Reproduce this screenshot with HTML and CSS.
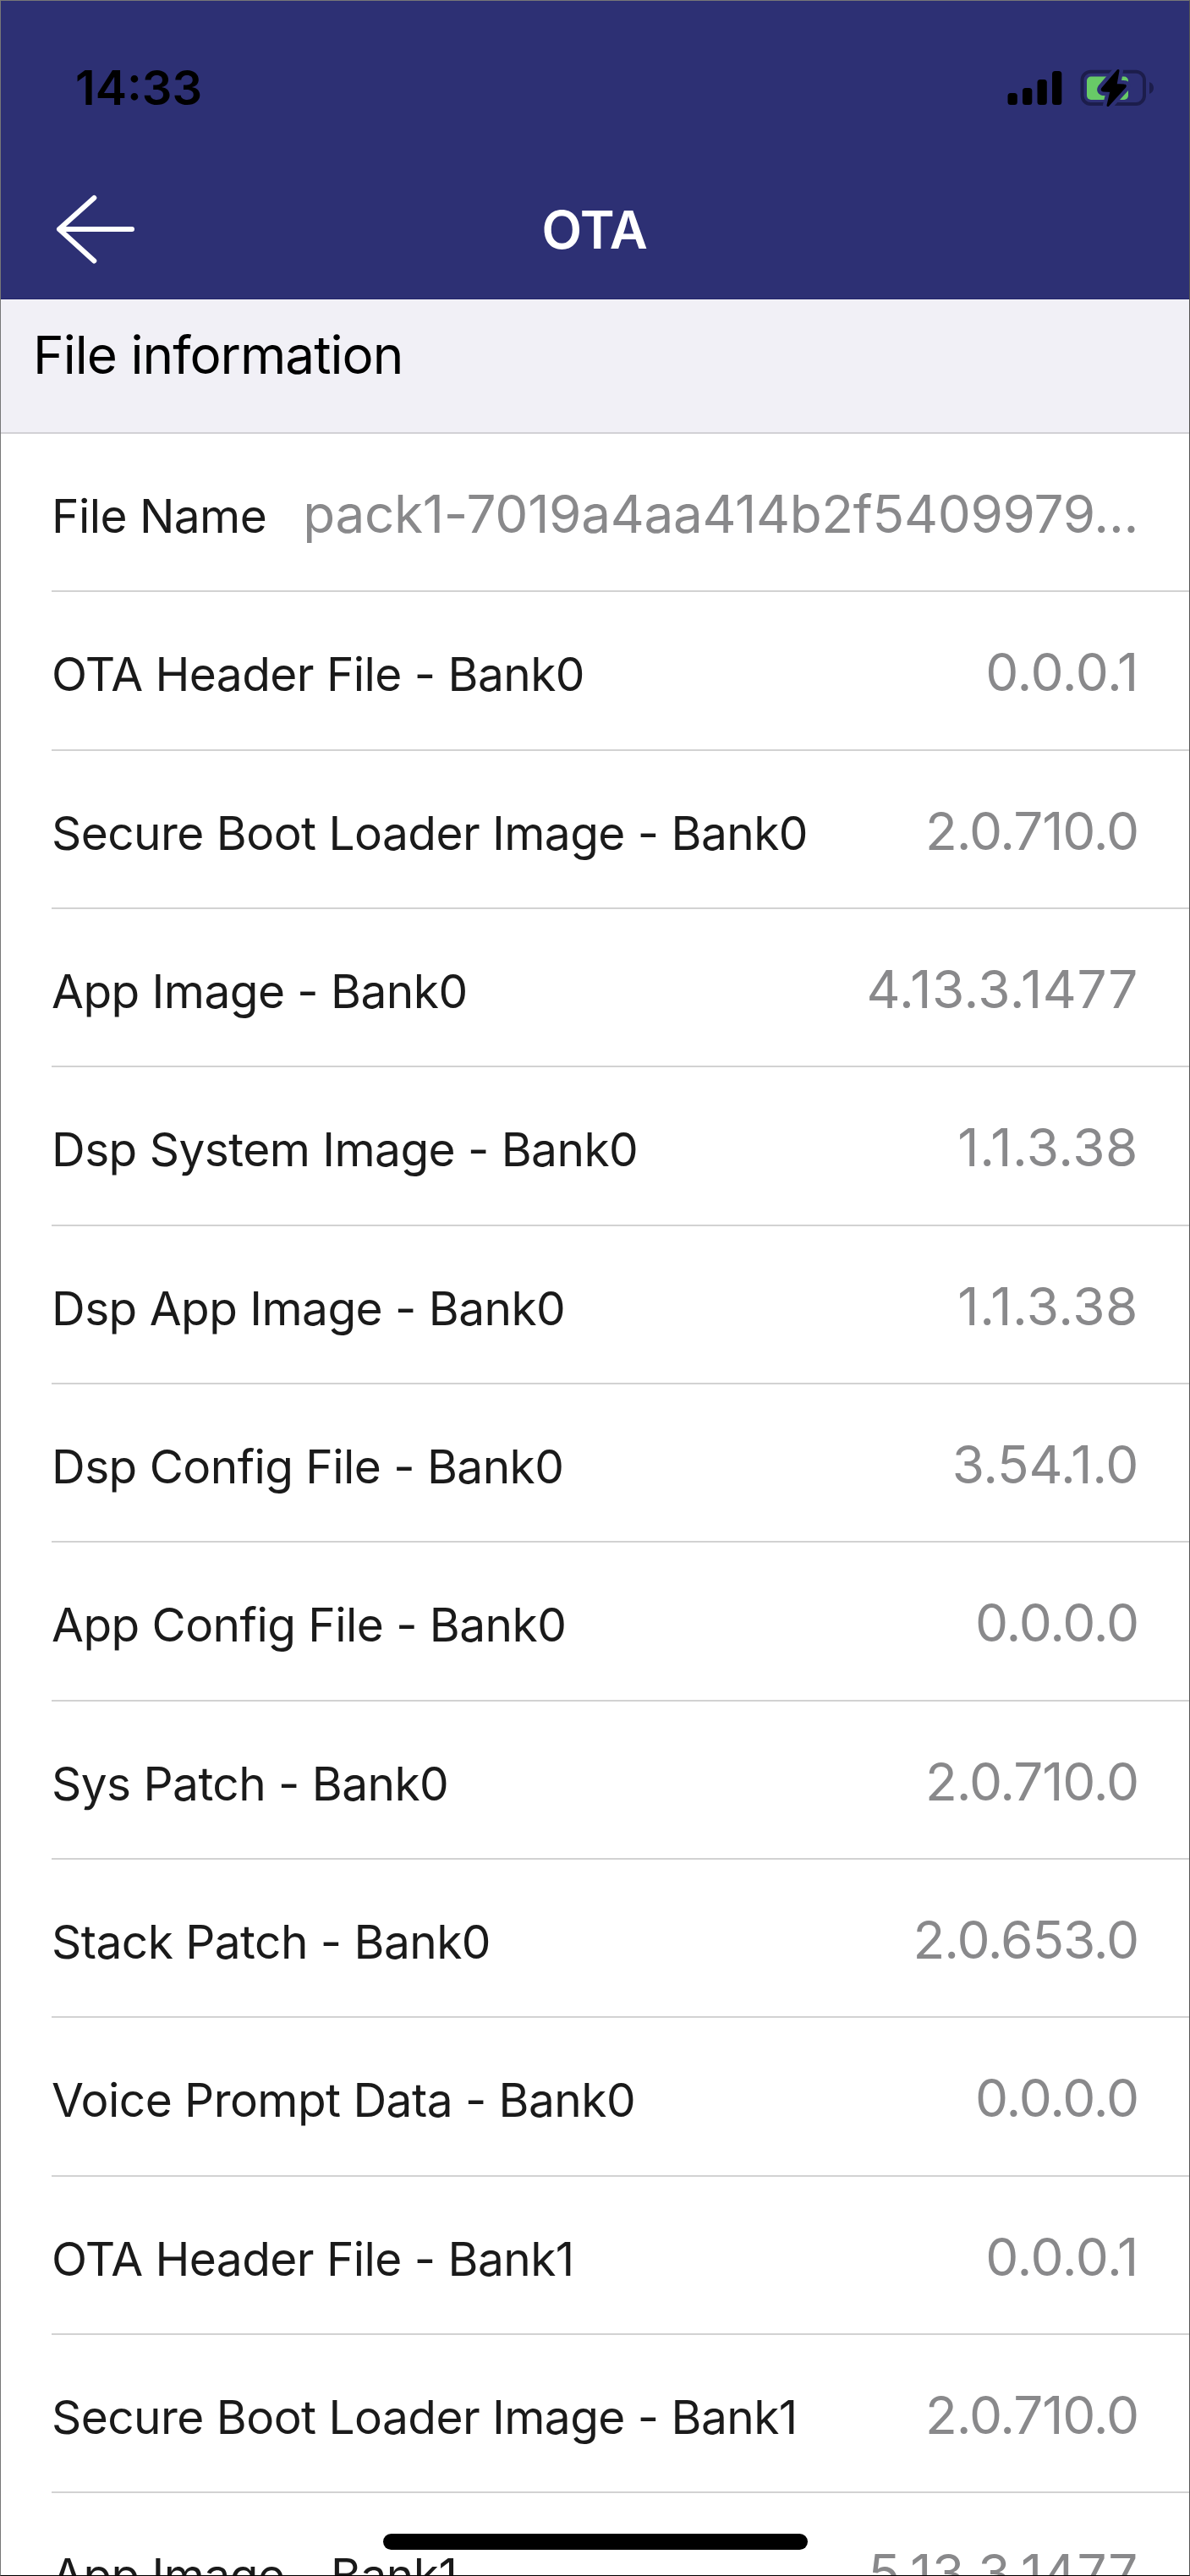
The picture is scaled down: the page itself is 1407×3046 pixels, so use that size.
FILE: index.html
```html
<!DOCTYPE html>
<html lang="en">
<head>
    <meta charset="UTF-8">
    <title>OTA</title>
    <link rel="stylesheet" href="styles.css">
</head>
<body>
<div class="screen">
    <header class="header">
        <div class="status-bar">
            <span class="time">14:33</span>
            <svg class="status-icons" width="174" height="48" viewBox="1191 80 174 48">
                <!-- Signal -->
                <rect x="1191.5" y="110" width="11.3" height="14" rx="3.5"/>
                <rect x="1209" y="104" width="11.3" height="20" rx="3.5"/>
                <rect x="1226.5" y="94" width="11.3" height="30" rx="3.5"/>
                <rect x="1244" y="84" width="11.3" height="40" rx="3.5"/>
                <!-- Battery -->
                <rect x="1279.5" y="84.7" width="73.5" height="38.3" rx="10" fill="none" stroke="#1c1d4b" stroke-width="4"/>
                <path d="M1359 97 Q1364 99 1364 104 Q1364 109 1359 111 Z" fill="#1c1d4b"/>
                <rect x="1285" y="90.5" width="49" height="27.5" rx="5" fill="#68ca67"/>
                <path class="bolt-gap" d="M1322 83.5 L1303.5 105 Q1302.5 106.7 1304.5 107 L1314 107.5 L1310 124.5 L1330 102.5 Q1331 101 1329 101 L1319 100.5 Z"/>
                <path class="bolt" d="M1322 83.5 L1303.5 105 Q1302.5 106.7 1304.5 107 L1314 107.5 L1310 124.5 L1330 102.5 Q1331 101 1329 101 L1319 100.5 Z"/>
            </svg>
        </div>
        <div class="nav-bar">
            <svg class="back" width="94" height="82" viewBox="0 0 94 82">
                <path d="M45.3 4 L4 41 L45.3 78.5 M4 41 H90"/>
            </svg>
            <h1 class="title">OTA</h1>
        </div>
    </header>
    <h2 class="section-title">File information</h2>
    <div class="list">
        <div class="row"><span class="label">File Name</span><span class="value">pack1-7019a4aa414b2f5409979...</span></div>
        <div class="row"><span class="label">OTA Header File - Bank0</span><span class="value">0.0.0.1</span></div>
        <div class="row"><span class="label">Secure Boot Loader Image - Bank0</span><span class="value tight">2.0.710.0</span></div>
        <div class="row"><span class="label">App Image - Bank0</span><span class="value wide">4.13.3.1477</span></div>
        <div class="row"><span class="label">Dsp System Image - Bank0</span><span class="value wide">1.1.3.38</span></div>
        <div class="row"><span class="label">Dsp App Image - Bank0</span><span class="value wide">1.1.3.38</span></div>
        <div class="row"><span class="label">Dsp Config File - Bank0</span><span class="value">3.54.1.0</span></div>
        <div class="row"><span class="label">App Config File - Bank0</span><span class="value tight">0.0.0.0</span></div>
        <div class="row"><span class="label">Sys Patch - Bank0</span><span class="value tight">2.0.710.0</span></div>
        <div class="row"><span class="label">Stack Patch - Bank0</span><span class="value tight">2.0.653.0</span></div>
        <div class="row"><span class="label">Voice Prompt Data - Bank0</span><span class="value tight">0.0.0.0</span></div>
        <div class="row"><span class="label">OTA Header File - Bank1</span><span class="value">0.0.0.1</span></div>
        <div class="row"><span class="label">Secure Boot Loader Image - Bank1</span><span class="value tight">2.0.710.0</span></div>
        <div class="row"><span class="label">App Image - Bank1</span><span class="value wide">5.13.3.1477</span></div>
    </div>
    <div class="home-indicator"></div>
</div>
</body>
</html>
```

FILE: styles.css
```css
* {
    box-sizing: border-box;
}

body {
    margin: 0;
    font-family: Inter, "Liberation Sans", sans-serif;
    background-color: #fff;
}

.screen {
    position: relative;
    width: 1407px;
    height: 3046px;
    overflow: hidden;
    border: 1px solid #777;
    border-right-color: #555;
    border-bottom: 1px solid #000;
}

.header {
    height: 353px;
    background-color: #2d3074;
    border-bottom: 1px solid #22246a;
}

.status-bar {
    display: flex;
    justify-content: space-between;
    align-items: center;
    height: 206px;
    padding: 0 41px 0 88px;
}

.time {
    font-size: 56px;
    font-weight: 600;
}

.bolt-gap {
    fill: #2d3074;
    stroke: #2d3074;
    stroke-width: 12;
    stroke-linejoin: round;
}

.bolt {
    stroke: #000;
    stroke-width: 3;
    stroke-linejoin: round;
}

.nav-bar {
    display: grid;
    grid-template-columns: 94px 1fr 94px;
    align-items: center;
    height: 128px;
    padding: 0 66px 0 65px;
}

.back {
    fill: none;
    stroke: #fff;
    stroke-width: 6;
    stroke-linecap: round;
    stroke-linejoin: round;
}

.title {
    margin: 0;
    font-size: 62px;
    font-weight: 600;
    letter-spacing: -0.5px;
    text-align: center;
    color: #fff;
}

.section-title {
    height: 159px;
    margin: 0;
    padding: 28px 38px 0;
    font-size: 62px;
    font-weight: 400;
    line-height: 76px;
    letter-spacing: -0.95px;
    background-color: #f1f0f6;
    border-bottom: 2px solid #d2d1d5;
}

.row {
    display: flex;
    justify-content: space-between;
    align-items: baseline;
    height: 187.35px;
    margin-left: 60px;
    padding: 55px 60px 0 0;
    line-height: 80px;
    white-space: nowrap;
    border-bottom: 2px solid #d2d2d2;
}

.label {
    font-size: 55px;
    letter-spacing: -0.55px;
    color: #1a1a1a;
}

.value {
    font-size: 62px;
    letter-spacing: -0.3px;
    color: #89898b;
}

.value.tight {
    letter-spacing: -1.1px;
}

.value.wide {
    letter-spacing: 0.6px;
}

.home-indicator {
    position: absolute;
    left: 452px;
    bottom: 30px;
    width: 502px;
    height: 19px;
    border-radius: 10px;
    background-color: #000;
}
```
